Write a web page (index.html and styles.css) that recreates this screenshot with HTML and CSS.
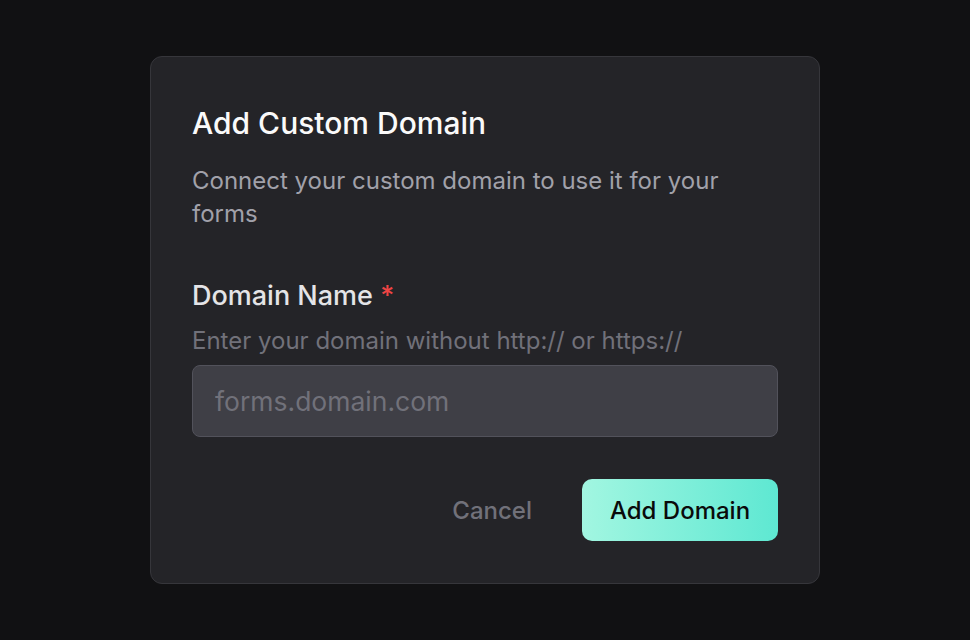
FILE: index.html
```html
<!DOCTYPE html>
<html lang="en">
<head>
<meta charset="UTF-8">
<meta name="viewport" content="width=device-width, initial-scale=1.0">
<title>Add Custom Domain</title>
<link rel="stylesheet" href="styles.css">
</head>
<body>
<div class="overlay">
<div class="modal">
<h2 class="modal-title">Add Custom Domain</h2>
<p class="modal-desc">Connect your custom domain to use it for your forms</p>
<form class="domain-form">
<label class="field-label" for="domain">Domain Name <span class="required">*</span></label>
<p class="field-help">Enter your domain without http:// or https://</p>
<input type="text" id="domain" class="field-input" placeholder="forms.domain.com">
<div class="actions">
<button type="button" class="btn-cancel">Cancel</button>
<button type="submit" class="btn-add">Add Domain</button>
</div>
</form>
</div>
</div>
</body>
</html>
```

FILE: styles.css
```css
body {
  margin: 0;
  padding: 0;
  background-color: #111113;
  font-family: Inter, "Noto Sans", Arial, sans-serif;
}

.overlay {
  width: 100%;
  height: 100vh;
  display: flex;
  justify-content: center;
  align-items: flex-start;
}

.modal {
  width: 586px;
  margin-top: 56px;
  padding: 48px 41px 42px;
  background-color: #242428;
  border: 1px solid #36363b;
  border-radius: 12px;
}

.modal-title {
  margin: 0;
  font-size: 30px;
  line-height: 36px;
  font-weight: 500;
  color: #fafafa;
}

.modal-desc {
  margin: 23px 0 0;
  max-width: 540px;
  font-size: 24px;
  line-height: 33px;
  color: #a1a1aa;
}

.domain-form {
  margin-top: 50px;
}

.field-label {
  display: block;
  font-size: 27px;
  line-height: 32px;
  font-weight: 500;
  color: #e4e4e7;
}

.required {
  color: #ef4444;
}

.field-help {
  margin: 14px 0 0;
  font-size: 24px;
  line-height: 30px;
  color: #71717a;
}

.field-input {
  display: block;
  box-sizing: border-box;
  width: 100%;
  height: 72px;
  margin-top: 9px;
  padding: 0 22px;
  background-color: #3f3f46;
  border: 1px solid #52525b;
  border-radius: 8px;
  font-family: inherit;
  font-size: 26.5px;
  color: #fafafa;
  outline: none;
}

.field-input::placeholder {
  color: #71717a;
}

.actions {
  display: flex;
  justify-content: flex-end;
  align-items: center;
  gap: 22px;
  margin-top: 42px;
}

.btn-cancel,
.btn-add {
  font-family: inherit;
  font-size: 24px;
  font-weight: 500;
  border: none;
  cursor: pointer;
}

.btn-cancel {
  padding: 0 28px;
  height: 62px;
  background: none;
  color: #71717a;
}

.btn-add {
  height: 62px;
  width: 196px;
  border-radius: 10px;
  background: linear-gradient(to right, #a2f6e1, #5ee8d2);
  color: #0a0a0a;
}
```
